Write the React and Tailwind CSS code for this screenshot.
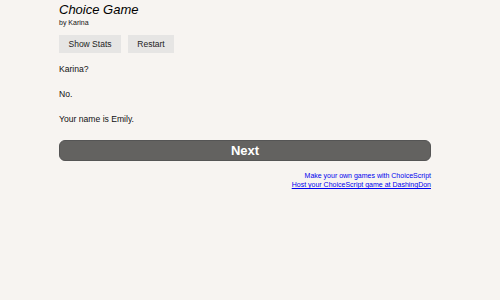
export default function App() {
  return (
    <div className="min-h-[300px] w-[500px] bg-[#f7f4f1] font-['Liberation_Sans',Arial,sans-serif] text-[#111]">
      <div className="ml-[59px] w-[372px] pt-[2px]">
        <h1 className="text-[13px] italic leading-[16px] text-black">Choice Game</h1>
        <div className="text-[7px] leading-[8px] mt-[1px]">by Karina</div>
        <div className="mt-[8px] flex gap-[7px]">
          <button className="h-[18px] w-[62px] bg-[#e6e5e4] text-[8.5px] text-[#222]">Show Stats</button>
          <button className="h-[18px] w-[46px] bg-[#e6e5e4] text-[8.5px] text-[#222]">Restart</button>
        </div>
        <p className="mt-[11px] text-[8.6px] leading-[11px]">Karina?</p>
        <p className="mt-[14px] text-[8.6px] leading-[11px]">No.</p>
        <p className="mt-[14px] text-[8.6px] leading-[11px]">Your name is Emily.</p>
        <button className="mt-[15px] flex h-[21px] w-full items-center justify-center rounded-[6px] border border-[#555] bg-[#636260] text-[13px] font-bold text-white">
          Next
        </button>
        <div className="mt-[10px] flex flex-col items-end text-[7px] leading-[9px]">
          <a href="#" className="text-[#0000ee]">Make your own games with ChoiceScript</a>
          <a href="#" className="text-[#0000ee] underline">Host your ChoiceScript game at DashingDon</a>
        </div>
      </div>
    </div>
  )
}
